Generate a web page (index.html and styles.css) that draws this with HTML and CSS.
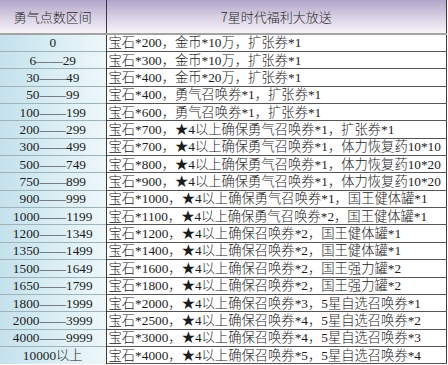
FILE: index.html
```html
<!DOCTYPE html>
<html lang="zh-CN">
<head>
<meta charset="utf-8">
<title>7星时代福利大放送</title>
<link rel="stylesheet" href="styles.css">
</head>
<body>
<table class="rewards">
  <colgroup><col class="col-range"><col class="col-reward"></colgroup>
  <thead>
    <tr><th class="h-range">勇气点数区间</th><th class="h-reward">7星时代福利大放送</th></tr>
  </thead>
  <tbody>
    <tr><td class="range">0</td><td class="reward">宝石*200，金币*10万，扩张券*1</td></tr>
    <tr><td class="range">6——29</td><td class="reward">宝石*300，金币*10万，扩张券*1</td></tr>
    <tr><td class="range">30——49</td><td class="reward">宝石*400，金币*20万，扩张券*1</td></tr>
    <tr><td class="range">50——99</td><td class="reward">宝石*400，勇气召唤券*1，扩张券*1</td></tr>
    <tr><td class="range">100——199</td><td class="reward">宝石*600，勇气召唤券*1，扩张券*1</td></tr>
    <tr><td class="range">200——299</td><td class="reward">宝石*700，★4以上确保勇气召唤券*1，扩张券*1</td></tr>
    <tr><td class="range">300——499</td><td class="reward">宝石*700，★4以上确保勇气召唤券*1，体力恢复药10*10</td></tr>
    <tr><td class="range">500——749</td><td class="reward">宝石*800，★4以上确保勇气召唤券*1，体力恢复药10*20</td></tr>
    <tr><td class="range">750——899</td><td class="reward">宝石*900，★4以上确保勇气召唤券*1，体力恢复药10*20</td></tr>
    <tr><td class="range">900——999</td><td class="reward">宝石*1000，★4以上确保勇气召唤券*1，国王健体罐*1</td></tr>
    <tr><td class="range">1000——1199</td><td class="reward">宝石*1100，★4以上确保勇气召唤券*2，国王健体罐*1</td></tr>
    <tr><td class="range">1200——1349</td><td class="reward">宝石*1200，★4以上确保召唤券*2，国王健体罐*1</td></tr>
    <tr><td class="range">1350——1499</td><td class="reward">宝石*1400，★4以上确保召唤券*2，国王健体罐*1</td></tr>
    <tr><td class="range">1500——1649</td><td class="reward">宝石*1600，★4以上确保召唤券*2，国王强力罐*2</td></tr>
    <tr><td class="range">1650——1799</td><td class="reward">宝石*1800，★4以上确保召唤券*2，国王强力罐*2</td></tr>
    <tr><td class="range">1800——1999</td><td class="reward">宝石*2000，★4以上确保召唤券*3，5星自选召唤券*1</td></tr>
    <tr><td class="range">2000——3999</td><td class="reward">宝石*2500，★4以上确保召唤券*4，5星自选召唤券*2</td></tr>
    <tr><td class="range">4000——9999</td><td class="reward">宝石*3000，★4以上确保召唤券*4，5星自选召唤券*3</td></tr>
    <tr><td class="range">10000以上</td><td class="reward">宝石*4000，★4以上确保召唤券*5，5星自选召唤券*4</td></tr>
  </tbody>
</table>
</body>
</html>
```
FILE: styles.css
```css
html, body {
  margin: 0;
  padding: 0;
  background: #ffffff;
}

.rewards {
  width: 447px;
  table-layout: fixed;
  border-collapse: collapse;
  font-family: "Liberation Serif", "Noto Sans CJK SC", serif;
  font-size: 13.3px;
  font-weight: 300;
  color: #1c1c1c;
}

.col-range { width: 106px; }

.rewards thead tr {
  height: 34px;
}

.rewards th {
  font-family: "Noto Sans CJK SC", sans-serif;
  font-weight: 300;
  font-size: 13px;
  color: #2a2a2a;
  background: linear-gradient(to bottom, #b2a4ca 0%, #d7cfe3 50%, #f6f4f9 100%);
  border-bottom: 2px solid #a3a3a3;
  padding: 0;
  text-align: center;
  vertical-align: middle;
}

.h-range {
  border-right: 1px solid #3a3a3a;
}

.h-reward {
  border-right: 1px solid #3a3a3a;
}

.rewards tbody tr {
  height: 17.37px;
}

.rewards td {
  padding: 0;
  line-height: 15px;
  vertical-align: middle;
  white-space: nowrap;
  overflow: hidden;
}

.range {
  text-align: center;
  background: linear-gradient(to right, #c4e1ec 0%, #dbeef4 55%, #eef7fa 100%);
  border-top: 1px solid #9fb3ba;
  border-right: 1px solid #3a3a3a;
}

.reward {
  text-align: left;
  padding-left: 2px !important;
  border-top: 1px solid #555555;
  border-right: 1px solid #3a3a3a;
  border-bottom: 1px solid #555555;
}
```
